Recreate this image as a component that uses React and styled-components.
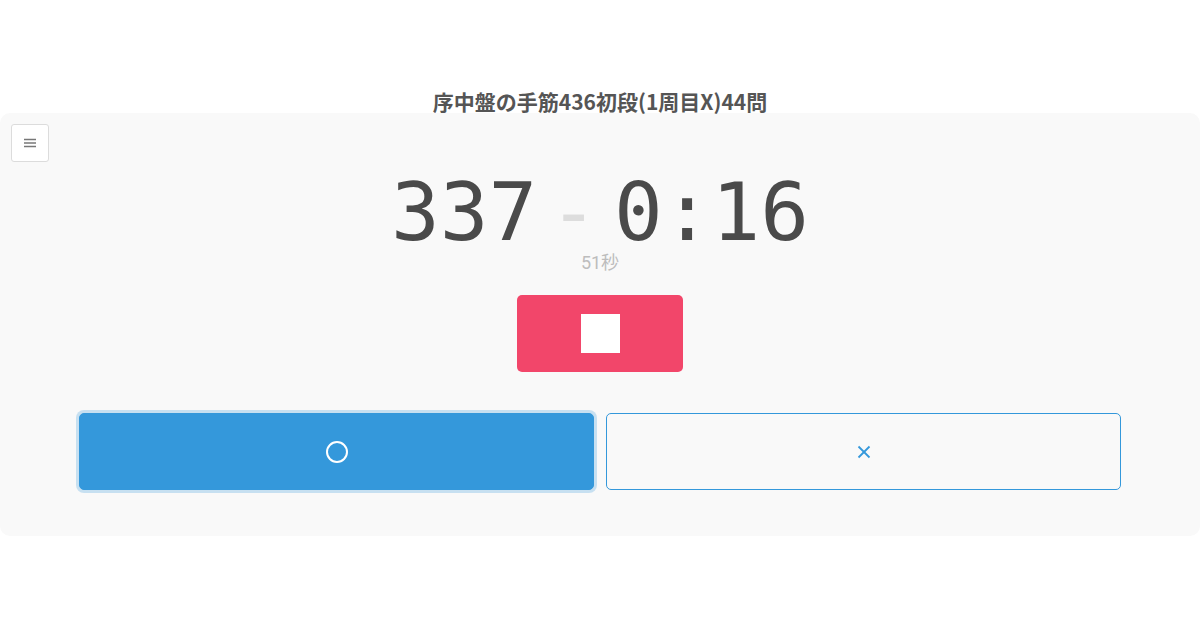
import React from "react";
import styled, { createGlobalStyle } from "styled-components";

const Global = createGlobalStyle`
  html, body { margin: 0; padding: 0; background: #ffffff; }
  body { font-family: "Noto Sans CJK JP", sans-serif; }
`;

const Page = styled.div`
  width: 1200px;
  height: 630px;
  padding-top: 90px;
  box-sizing: border-box;
`;

const Title = styled.h1`
  margin: 0;
  height: 23px;
  line-height: 23px;
  text-align: center;
  font-family: "Noto Sans CJK JP", sans-serif;
  font-size: 21px;
  font-weight: 700;
  color: #555555;
`;

const Panel = styled.main`
  background: #f9f9f9;
  border-radius: 10px;
  height: 423px;
  box-sizing: border-box;
  padding: 11px 0 0;
  display: flex;
  flex-direction: column;
`;

const TopBar = styled.div`
  display: flex;
  padding-left: 11px;
`;

const MenuButton = styled.button`
  width: 38px;
  height: 38px;
  padding: 0;
  border: 1px solid #dcdcdc;
  border-radius: 3px;
  background: #ffffff;
  display: flex;
  align-items: center;
  justify-content: center;
`;

const Counter = styled.div`
  display: flex;
  justify-content: center;
  align-items: baseline;
  font-family: "DejaVu Sans Mono", monospace;
  font-size: 81px;
  line-height: 76px;
  color: #4a4a4a;
  margin-top: 12px;
`;

const Sep = styled.span`
  color: #dddddd;
  margin: 0 16px 0 12px;
`;

const Sub = styled.div`
  text-align: center;
  font-family: "Roboto", "Noto Sans CJK JP", sans-serif;
  font-size: 18px;
  line-height: 18px;
  color: #bdbdbd;
  margin-top: 4px;
`;

const StopButton = styled.button`
  align-self: center;
  margin-top: 23px;
  width: 166px;
  height: 77px;
  border: none;
  border-radius: 5px;
  background: #f2466a;
  display: flex;
  align-items: center;
  justify-content: center;
  padding: 0;
`;

const StopSquare = styled.span`
  width: 39px;
  height: 39px;
  background: #ffffff;
`;

const AnswerRow = styled.div`
  display: grid;
  grid-template-columns: 1fr 1fr;
  gap: 12px;
  padding: 0 79px;
  margin-top: 41px;
`;

const AnswerButton = styled.button`
  height: 77px;
  border-radius: 5px;
  border: 1px solid #3498db;
  background: ${(p) => (p.$filled ? "#3498db" : "transparent")};
  color: ${(p) => (p.$filled ? "#ffffff" : "#3498db")};
  box-shadow: ${(p) => (p.$filled ? "0 0 0 3px rgba(52,152,219,0.25)" : "none")};
  display: flex;
  align-items: center;
  justify-content: center;
  padding: 0;
`;

const MenuIcon = () => (
  <svg width="14" height="10" viewBox="0 0 14 10">
    <g stroke="#777" strokeWidth="1.5">
      <line x1="1" y1="1.5" x2="13" y2="1.5" />
      <line x1="1" y1="5" x2="13" y2="5" />
      <line x1="1" y1="8.5" x2="13" y2="8.5" />
    </g>
  </svg>
);

const CircleIcon = () => (
  <svg width="24" height="24" viewBox="0 0 24 24">
    <circle cx="12" cy="12" r="10" fill="none" stroke="#fff" strokeWidth="2" />
  </svg>
);

const CrossIcon = () => (
  <svg width="14" height="14" viewBox="0 0 14 14">
    <g stroke="#3498db" strokeWidth="1.8">
      <line x1="1.5" y1="1.5" x2="12.5" y2="12.5" />
      <line x1="12.5" y1="1.5" x2="1.5" y2="12.5" />
    </g>
  </svg>
);

export default function App() {
  return (
    <Page>
      <Global />
      <Title>序中盤の手筋436初段(1周目X)44問</Title>
      <Panel>
        <TopBar>
          <MenuButton aria-label="menu">
            <MenuIcon />
          </MenuButton>
        </TopBar>
        <Counter>
          <span>337</span>
          <Sep>-</Sep>
          <span>0:16</span>
        </Counter>
        <Sub>51秒</Sub>
        <StopButton aria-label="stop">
          <StopSquare />
        </StopButton>
        <AnswerRow>
          <AnswerButton $filled aria-label="correct">
            <CircleIcon />
          </AnswerButton>
          <AnswerButton aria-label="wrong">
            <CrossIcon />
          </AnswerButton>
        </AnswerRow>
      </Panel>
    </Page>
  );
}
